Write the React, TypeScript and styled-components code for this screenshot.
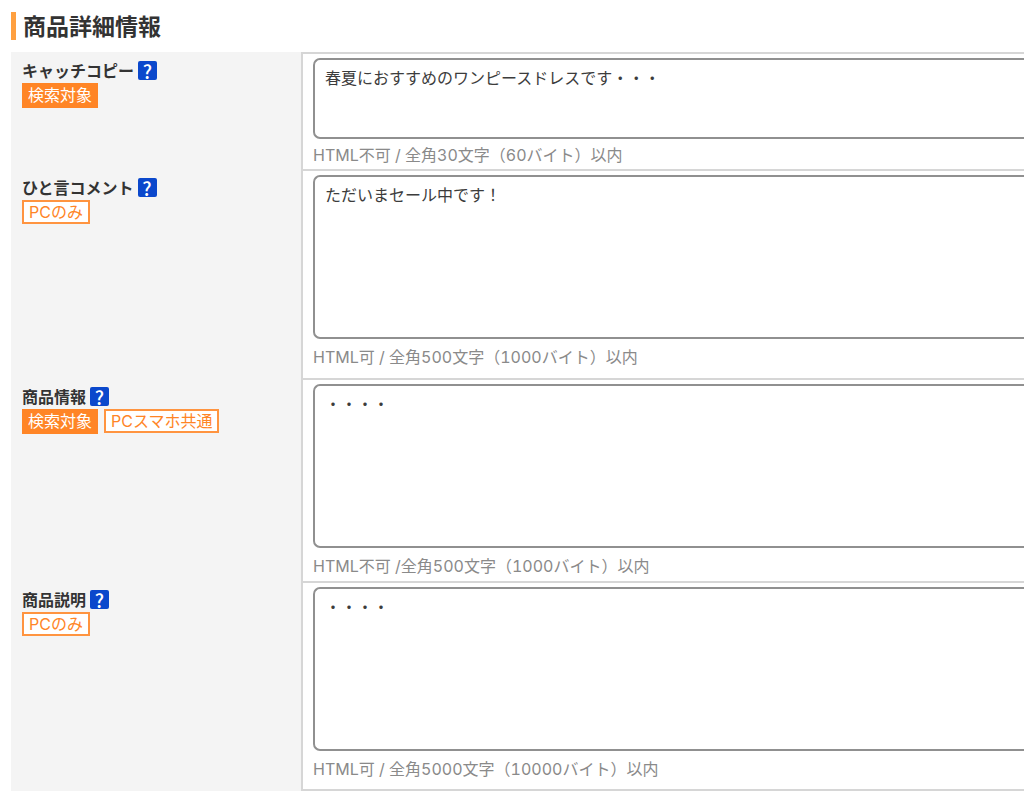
import React from "react";
import styled, { createGlobalStyle } from "styled-components";

const GlobalStyle = createGlobalStyle`
  * { box-sizing: border-box; }
  body {
    margin: 0;
    background: #fff;
    color: #333;
    font-family: Inter, "Noto Sans CJK JP", sans-serif;
    font-size: 16px;
    line-height: 24px;
    overflow-x: hidden;
  }
`;

const Page = styled.main`
  padding: 12px 0 4px 11px;
`;

const Heading = styled.h1`
  margin: 0 0 12px;
  padding: 0 0 2px 7px;
  border-left: 5px solid #ffa040;
  font-family: "Noto Sans CJK JP", sans-serif;
  font-size: 23px;
  line-height: 26px;
  font-weight: 700;
`;

const Form = styled.form`
  display: flex;
  flex-direction: column;
`;

const Row = styled.div`
  display: grid;
  grid-template-columns: 290px minmax(0, 1fr);
`;

const LabelCell = styled.div`
  padding: 6px 11px;
  background: #f4f4f4;
`;

const LabelLine = styled.div`
  display: flex;
  align-items: center;
  gap: 4px;
`;

const Label = styled.label`
  font-family: "Noto Sans CJK JP", sans-serif;
  font-weight: 700;
`;

const HelpButton = styled.button`
  display: flex;
  align-items: center;
  justify-content: center;
  width: 19px;
  height: 19px;
  padding: 0;
  border: 0;
  border-radius: 2px;
  background: #0b48cc;
  color: #fff;
  font-family: "Noto Sans CJK JP", sans-serif;
  font-size: 19px;
  line-height: 19px;
  font-weight: 500;
  cursor: pointer;
`;

const Badges = styled.div`
  display: flex;
  align-items: flex-start;
  gap: 6px;
  margin-top: 1px;
`;

const Badge = styled.span<{ $filled: boolean }>`
  padding: ${(p) => (p.$filled ? "0 6px" : "0 5px")};
  border: ${(p) => (p.$filled ? "0" : "2px solid #ff9440")};
  background: ${(p) => (p.$filled ? "#ff8526" : "#fff")};
  color: ${(p) => (p.$filled ? "#fff" : "#ff8526")};
  line-height: ${(p) => (p.$filled ? "25px" : "20px")};
`;

const FieldCell = styled.div<{ $bottom: number }>`
  display: flex;
  flex-direction: column;
  padding: 4px 0 ${(p) => p.$bottom}px 10px;
  border-top: 2px solid #d6d6d6;
  border-left: 2px solid #d6d6d6;

  ${Row}:last-child > & {
    border-bottom: 2px solid #d6d6d6;
  }
`;

const TextArea = styled.textarea<{ $tall: boolean }>`
  display: block;
  width: 100%;
  height: ${(p) => (p.$tall ? 164 : 81)}px;
  padding: 6px 10px;
  border: 2px solid #909090;
  border-right: 0;
  border-radius: 7px 0 0 7px;
  background: #fff;
  color: #3c3c3c;
  font: inherit;
  resize: none;
  outline: none;
`;

const Hint = styled.p<{ $gap: number }>`
  margin: ${(p) => p.$gap}px 0 0;
  color: #8a8a8a;
  font-variant-numeric: tabular-nums;
`;

type Field = {
  id: string;
  label: string;
  badges: { text: string; filled: boolean }[];
  value: string;
  hint: string;
  tall: boolean;
  bottom: number;
};

const searchable = { text: "検索対象", filled: true };
const pcOnly = { text: "PCのみ", filled: false };
const shared = { text: "PCスマホ共通", filled: false };

const fields: Field[] = [
  {
    id: "catch",
    label: "キャッチコピー",
    badges: [searchable],
    value: "春夏におすすめのワンピースドレスです・・・",
    hint: "HTML不可 / 全角30文字（60バイト）以内",
    tall: false,
    bottom: 2,
  },
  {
    id: "comment",
    label: "ひと言コメント",
    badges: [pcOnly],
    value: "ただいまセール中です！",
    hint: "HTML可 / 全角500文字（1000バイト）以内",
    tall: true,
    bottom: 9,
  },
  {
    id: "info",
    label: "商品情報",
    badges: [searchable, shared],
    value: "・・・・",
    hint: "HTML不可 /全角500文字（1000バイト）以内",
    tall: true,
    bottom: 3,
  },
  {
    id: "description",
    label: "商品説明",
    badges: [pcOnly],
    value: "・・・・",
    hint: "HTML可 / 全角5000文字（10000バイト）以内",
    tall: true,
    bottom: 8,
  },
];

export default function App() {
  return (
    <>
      <GlobalStyle />
      <Page lang="ja">
        <Heading>商品詳細情報</Heading>
        <Form>
          {fields.map((f) => (
            <Row key={f.id}>
              <LabelCell>
                <LabelLine>
                  <Label htmlFor={f.id}>{f.label}</Label>
                  <HelpButton type="button">?</HelpButton>
                </LabelLine>
                <Badges>
                  {f.badges.map((b) => (
                    <Badge key={b.text} $filled={b.filled}>
                      {b.text}
                    </Badge>
                  ))}
                </Badges>
              </LabelCell>
              <FieldCell $bottom={f.bottom}>
                <TextArea
                  id={f.id}
                  $tall={f.tall}
                  defaultValue={f.value}
                  aria-describedby={`${f.id}-hint`}
                  spellCheck={false}
                />
                <Hint id={`${f.id}-hint`} $gap={f.tall ? 6 : 4}>
                  {f.hint}
                </Hint>
              </FieldCell>
            </Row>
          ))}
        </Form>
      </Page>
    </>
  );
}
